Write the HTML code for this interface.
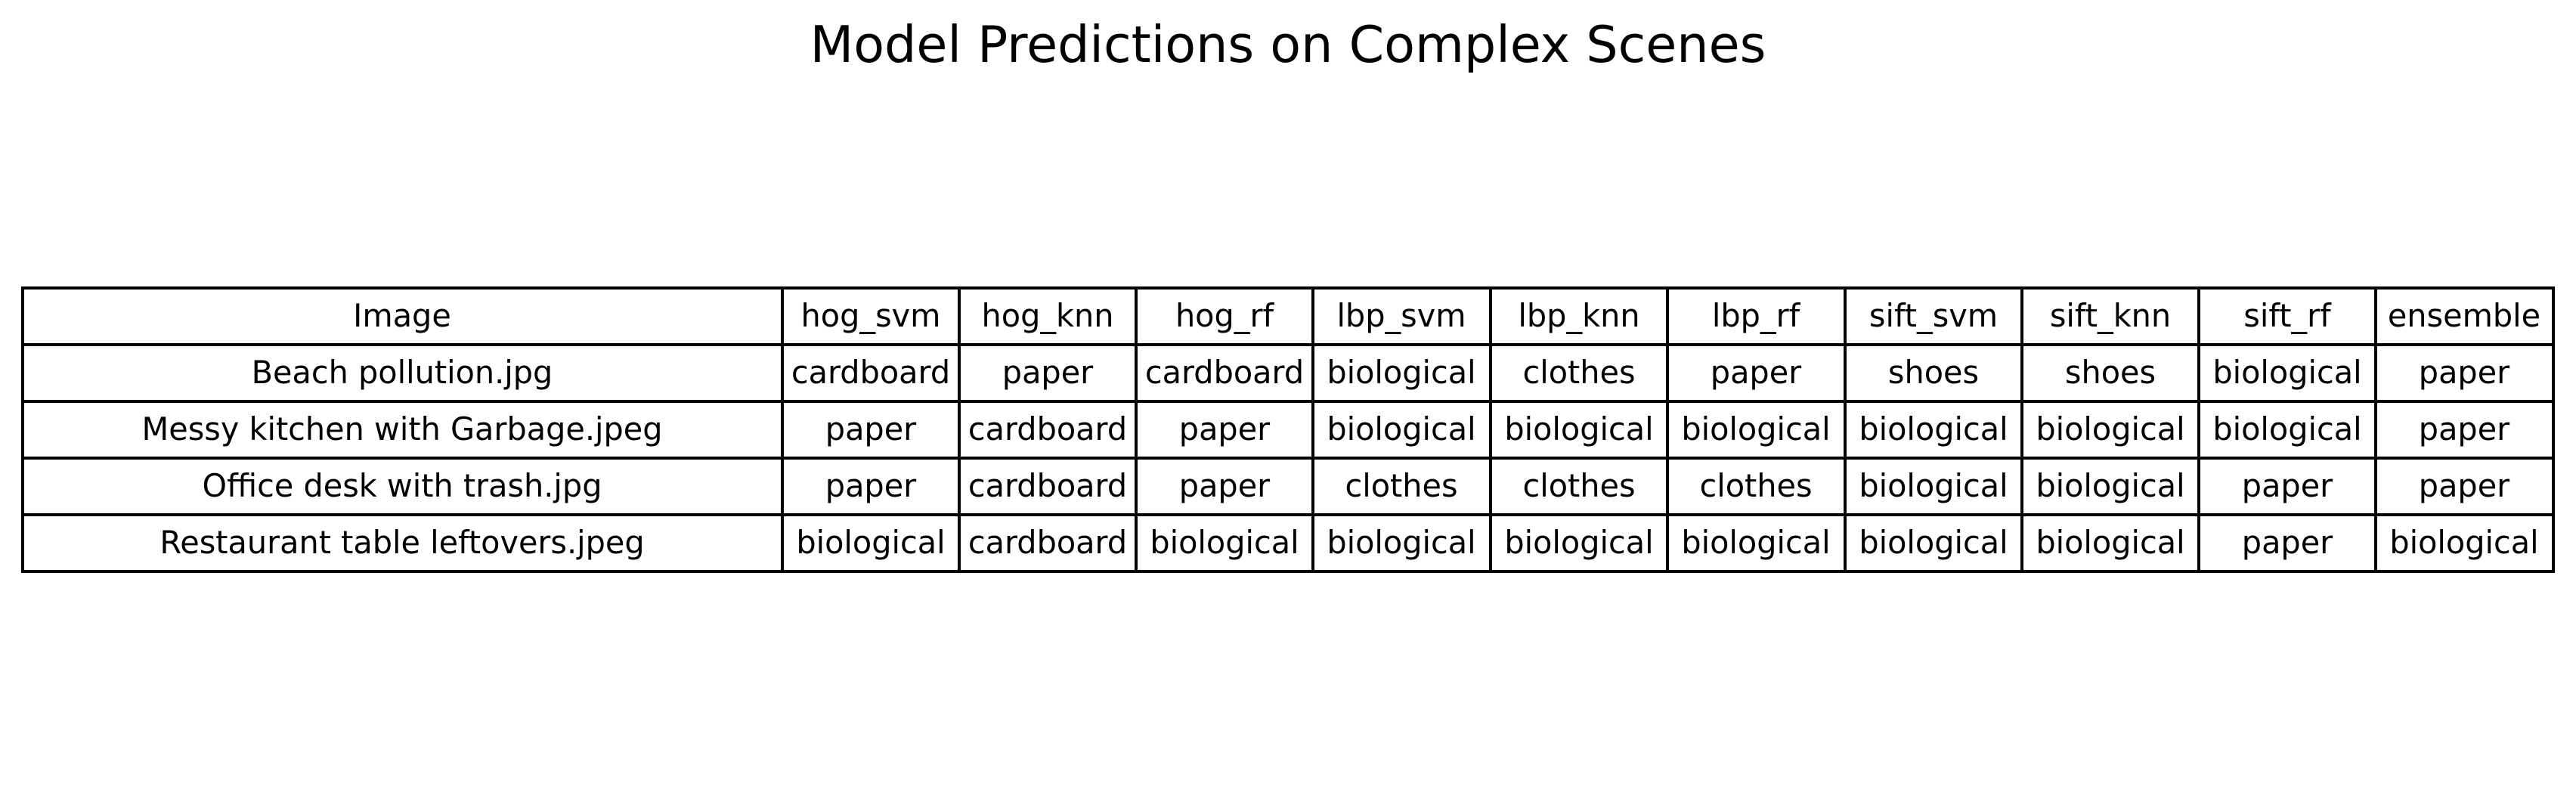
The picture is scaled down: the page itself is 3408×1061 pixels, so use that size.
<!DOCTYPE html>
<html><head><meta charset="utf-8"><style>
html,body{margin:0;padding:0;background:#fff;}
body{width:3408px;height:1061px;overflow:hidden;}
svg{display:block;}
text{font-family:"DejaVu Sans","Liberation Sans",sans-serif;fill:#000;}
</style></head><body>
<svg width="3408" height="1061" viewBox="0 0 3408 1061" xmlns="http://www.w3.org/2000/svg">
<text x="1704" y="82" font-size="66.7" text-anchor="middle">Model Predictions on Complex Scenes</text>
<g stroke="#000" stroke-width="4" fill="none">
<rect x="30" y="381" width="3348" height="375"/>
<line x1="30" y1="456" x2="3378" y2="456"/>
<line x1="30" y1="531" x2="3378" y2="531"/>
<line x1="30" y1="606" x2="3378" y2="606"/>
<line x1="30" y1="681" x2="3378" y2="681"/>
<line x1="1035" y1="381" x2="1035" y2="756"/>
<line x1="1269" y1="381" x2="1269" y2="756"/>
<line x1="1503" y1="381" x2="1503" y2="756"/>
<line x1="1737" y1="381" x2="1737" y2="756"/>
<line x1="1972" y1="381" x2="1972" y2="756"/>
<line x1="2206" y1="381" x2="2206" y2="756"/>
<line x1="2441" y1="381" x2="2441" y2="756"/>
<line x1="2675" y1="381" x2="2675" y2="756"/>
<line x1="2909" y1="381" x2="2909" y2="756"/>
<line x1="3143" y1="381" x2="3143" y2="756"/>
</g>
<g font-size="41.4" text-anchor="middle">
<g transform="translate(0,432)">
<text x="532">Image</text><text x="1152">hog_svm</text><text x="1386">hog_knn</text><text x="1620">hog_rf</text><text x="1854">lbp_svm</text><text x="2089">lbp_knn</text><text x="2323">lbp_rf</text><text x="2558">sift_svm</text><text x="2792">sift_knn</text><text x="3026">sift_rf</text><text x="3260">ensemble</text>
</g>
<g transform="translate(0,507)">
<text x="532">Beach pollution.jpg</text><text x="1152">cardboard</text><text x="1386">paper</text><text x="1620">cardboard</text><text x="1854">biological</text><text x="2089">clothes</text><text x="2323">paper</text><text x="2558">shoes</text><text x="2792">shoes</text><text x="3026">biological</text><text x="3260">paper</text>
</g>
<g transform="translate(0,582)">
<text x="532">Messy kitchen with Garbage.jpeg</text><text x="1152">paper</text><text x="1386">cardboard</text><text x="1620">paper</text><text x="1854">biological</text><text x="2089">biological</text><text x="2323">biological</text><text x="2558">biological</text><text x="2792">biological</text><text x="3026">biological</text><text x="3260">paper</text>
</g>
<g transform="translate(0,657)">
<text x="532">Office desk with trash.jpg</text><text x="1152">paper</text><text x="1386">cardboard</text><text x="1620">paper</text><text x="1854">clothes</text><text x="2089">clothes</text><text x="2323">clothes</text><text x="2558">biological</text><text x="2792">biological</text><text x="3026">paper</text><text x="3260">paper</text>
</g>
<g transform="translate(0,732)">
<text x="532">Restaurant table leftovers.jpeg</text><text x="1152">biological</text><text x="1386">cardboard</text><text x="1620">biological</text><text x="1854">biological</text><text x="2089">biological</text><text x="2323">biological</text><text x="2558">biological</text><text x="2792">biological</text><text x="3026">paper</text><text x="3260">biological</text>
</g>
</g>
</svg>
</body></html>
